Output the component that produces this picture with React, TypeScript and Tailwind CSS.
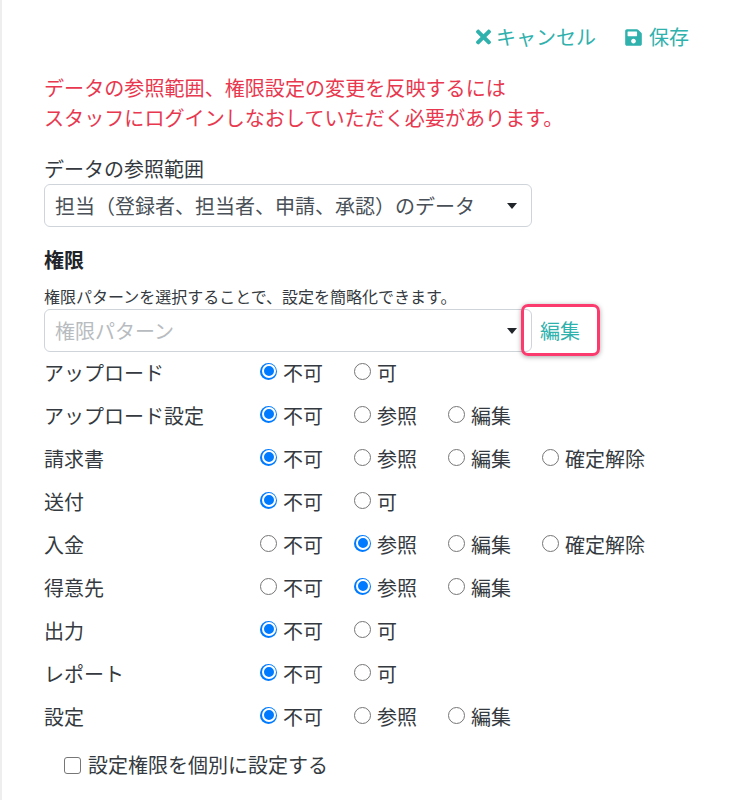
import { FaTimes, FaSave } from "react-icons/fa";

const rows: [string, string[], number][] = [
  ["アップロード", ["不可", "可"], 0],
  ["アップロード設定", ["不可", "参照", "編集"], 0],
  ["請求書", ["不可", "参照", "編集", "確定解除"], 0],
  ["送付", ["不可", "可"], 0],
  ["入金", ["不可", "参照", "編集", "確定解除"], 1],
  ["得意先", ["不可", "参照", "編集"], 1],
  ["出力", ["不可", "可"], 0],
  ["レポート", ["不可", "可"], 0],
  ["設定", ["不可", "参照", "編集"], 0],
];

function Radio({ on }: { on: boolean }) {
  return on ? (
    <span className="w-[17px] h-[17px] -mt-[3px] rounded-full bg-[#007bff] flex items-center justify-center shrink-0">
      <span className="w-[10px] h-[10px] rounded-full bg-[#007bff] border-2 border-white box-content" />
    </span>
  ) : (
    <span className="w-[17px] h-[17px] -mt-[3px] rounded-full border-[1.5px] border-[#767676] bg-white shrink-0" />
  );
}

function Caret() {
  return <span className="w-0 h-0 border-x-[5.5px] border-x-transparent border-t-[6px] border-t-[#212529]" />;
}

export default function App() {
  return (
    <div className="w-[746px] h-[800px] overflow-hidden bg-white border-l-2 border-[#eeeeee] pl-[42px] text-[#343a40] text-[20px] font-['Noto_Sans_CJK_JP','Noto_Sans',sans-serif]">
      <div className="flex justify-end items-center h-[30px] mt-[22px] pr-[57px] text-[#2fb1ad]">
        <span className="flex items-center">
          <FaTimes className="w-[15px] h-[22px] mr-[5px]" />
          キャンセル
        </span>
        <span className="flex items-center ml-[29px]">
          <FaSave className="w-[17px] h-[19px] mr-[7px]" />
          保存
        </span>
      </div>
      <p className="mt-[21px] text-[#e8384f] leading-[30px] text-[20.08px]">
        データの参照範囲、権限設定の変更を反映するには
        <br />
        スタッフにログインしなおしていただく必要があります。
      </p>
      <div className="mt-[21px] leading-[30px]">データの参照範囲</div>
      <div className="w-[488px] h-[43px] border border-[#ced4da] rounded-[6px] flex items-center justify-between pl-[10px] pr-[14px] text-[#495057]">
        <span>担当（登録者、担当者、申請、承認）のデータ</span>
        <Caret />
      </div>
      <div className="mt-[18px] font-bold text-[#212529] leading-[30px]">権限</div>
      <div className="mt-[10px] text-[16px] leading-[22px] text-[#343a40]">権限パターンを選択することで、設定を簡略化できます。</div>
      <div className="relative flex items-center mt-[2px] h-[43px]">
        <div className="w-[488px] h-[43px] border border-[#ced4da] rounded-[6px] flex items-center justify-between pl-[10px] pr-[14px] text-[#b8bcc0]">
          <span>権限パターン</span>
          <Caret />
        </div>
        <span className="ml-[8px] text-[#2fb1ad]">編集</span>
        <div className="absolute left-[477px] top-[-5px] w-[79px] h-[52px] border-[3.5px] border-[#fb3a6e] rounded-[7px] shadow-[0_1px_5px_rgba(0,0,0,0.35)]" />
      </div>
      <div className="-mt-px">
        {rows.map(([label, opts, sel]) => (
          <div key={label} className="flex items-center h-[43px]">
            <div className="w-[216px]">{label}</div>
            <div className="flex">
              {opts.map((o, i) => (
                <div key={o} className="flex items-center w-[94px] gap-[6px] whitespace-nowrap">
                  <Radio on={i === sel} />
                  <span>{o}</span>
                </div>
              ))}
            </div>
          </div>
        ))}
      </div>
      <div className="flex items-center ml-[20px] mt-[9px] h-[36px] gap-[7px]">
        <span className="w-[17px] h-[17px] border-[1.5px] border-[#767676] rounded-[3px]" />
        <span>設定権限を個別に設定する</span>
      </div>
    </div>
  );
}
